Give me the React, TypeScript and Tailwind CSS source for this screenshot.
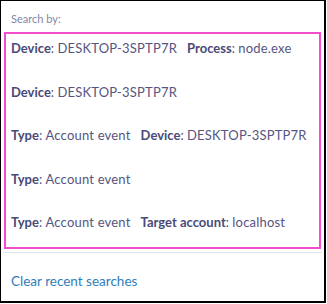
import React from "react";

type Part = { label: string; value: string };

const rows: Part[][] = [
  [
    { label: "Device", value: "DESKTOP-3SPTP7R" },
    { label: "Process", value: "node.exe" },
  ],
  [{ label: "Device", value: "DESKTOP-3SPTP7R" }],
  [
    { label: "Type", value: "Account event" },
    { label: "Device", value: "DESKTOP-3SPTP7R" },
  ],
  [{ label: "Type", value: "Account event" }],
  [
    { label: "Type", value: "Account event" },
    { label: "Target account", value: "localhost" },
  ],
];

const App = () => {
  return (
    <div className="w-[327px] h-[304px] bg-white font-['Lato',sans-serif]">
      <div className="w-[326px] h-[303px] border-l border-t border-r-2 border-b-2 border-black flex flex-col">
        <div className="pl-[10px] pt-[10px] h-[31px] shrink-0 text-[11px] text-[#8585a3]">
          Search by:
        </div>
        <div className="mx-[3px] border-2 border-[#f24ccf] flex flex-col gap-[23.5px] pt-[4px] pb-[15px] shrink-0">
          {rows.map((row, i) => (
            <div
              key={i}
              className="h-[20px] flex items-center pl-[5px] gap-[10px] text-[13px] text-[#55557f] leading-[20px]"
            >
              {row.map((p) => (
                <span key={p.label}>
                  <span className="font-bold text-[#4a4a78]">{p.label}</span>:{" "}
                  <span className="tracking-[0.2px]">{p.value}</span>
                </span>
              ))}
            </div>
          ))}
        </div>
        <div className="mx-[2px] mt-[3px] border-t border-[#e4e4ea]" />
        <div className="pl-[10px] pt-[18px] text-[13.5px] text-[#2e7dbb]">
          Clear recent searches
        </div>
      </div>
    </div>
  );
};

export default App;
